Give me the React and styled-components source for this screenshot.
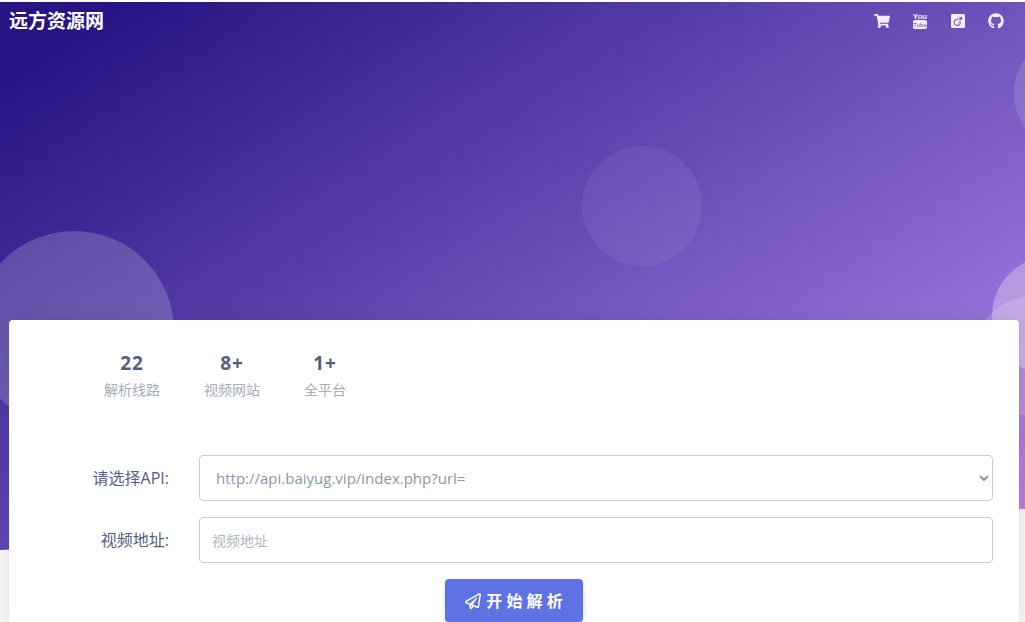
import React, { useState } from 'react';
import styled, { createGlobalStyle } from 'styled-components';
import { FaShoppingCart, FaViadeoSquare, FaGithub, FaRegPaperPlane } from 'react-icons/fa';

const GlobalStyle = createGlobalStyle`
  * {
    box-sizing: border-box;
  }

  body {
    margin: 0;
    background: #f4f4f5;
    color: #525f7f;
    font-family: 'Open Sans', 'Noto Sans CJK SC', sans-serif;
    font-size: 16px;
    line-height: 24px;
  }
`;

const Page = styled.div`
  display: flex;
  flex-direction: column;
  min-height: 100vh;
  border-top: 2px solid #fdfdfe;
`;

const Hero = styled.header`
  position: relative;
  flex: none;
  height: 548px;
  overflow: hidden;
  background: linear-gradient(147deg, #281483 7%, #8f6ed5 76%, #d782d9 110%);
  clip-path: polygon(0 0, 100% 0, 100% 507px, 0 100%);
`;

const Navbar = styled.nav`
  position: relative;
  display: flex;
  align-items: center;
  justify-content: space-between;
  height: 38px;
  padding: 0 20px 0 9px;
`;

const Brand = styled.a`
  color: #fff;
  font-size: 19px;
  font-weight: 700;
  text-decoration: none;
`;

const NavLinks = styled.div`
  display: flex;
  gap: 20px;
`;

const NavLink = styled.a`
  display: flex;
  align-items: center;
  justify-content: center;
  width: 18px;
  height: 18px;
  color: #f3edff;
  font-size: 16px;
`;

// Translucent bubbles floating on the hero gradient
const Bubble = styled.span`
  position: absolute;
  top: ${(p) => p.$top};
  left: ${(p) => p.$left || 'auto'};
  right: ${(p) => p.$right || 'auto'};
  width: ${(p) => p.$size || '120px'};
  height: ${(p) => p.$size || '120px'};
  border-radius: 50%;
  background: rgba(255, 255, 255, ${(p) => p.$alpha});
`;

const Card = styled.main`
  position: relative;
  flex: 1;
  margin: -230px 6px 0 9px;
  padding: 30px 26px 0 0;
  border-radius: 4px 4px 0 0;
  background: #fff;
  box-shadow: 0 0 16px rgba(0, 0, 0, 0.08);
`;

const Stats = styled.div`
  display: flex;
  gap: 44px;
  padding-left: 95px;
  margin-bottom: 52px;
`;

const Stat = styled.div`
  text-align: center;
`;

const StatValue = styled.strong`
  display: block;
  font-size: 19px;
  line-height: 27px;
  letter-spacing: 1px;
`;

const StatLabel = styled.span`
  display: block;
  color: #a5adb6;
  font-size: 14px;
  line-height: 26px;
`;

const Form = styled.form`
  display: flex;
  flex-direction: column;
  gap: 16px;
`;

const Field = styled.div`
  display: grid;
  grid-template-columns: 160px 1fr;
  column-gap: 30px;
  align-items: center;
`;

const Label = styled.label`
  text-align: right;
`;

const Select = styled.select`
  width: 100%;
  height: 46px;
  padding: 0 12px;
  border: 1px solid #cacdd2;
  border-radius: 4px;
  background: #fff;
  color: #8898aa;
  font: inherit;
  font-size: 15px;
`;

const Input = styled.input`
  width: 100%;
  height: 46px;
  padding: 0 12px;
  border: 1px solid #cacdd2;
  border-radius: 4px;
  background: #fff;
  color: #8898aa;
  font: inherit;
  font-size: 14px;

  &::placeholder {
    color: #adb5bd;
    opacity: 1;
  }
`;

const SubmitButton = styled.button`
  display: flex;
  align-items: center;
  align-self: center;
  gap: 5px;
  height: 43px;
  margin-left: 26px;
  padding: 0 20px;
  border: none;
  border-radius: 4px;
  background: #5e72e4;
  color: #fff;
  font: inherit;
  font-weight: 700;
  cursor: pointer;
  box-shadow: 0 4px 6px rgba(50, 50, 93, 0.11), 0 1px 3px rgba(0, 0, 0, 0.08);

  &:hover {
    background: #4c62e0;
  }
`;

const stats = [
  { value: '22', label: '解析线路' },
  { value: '8+', label: '视频网站' },
  { value: '1+', label: '全平台' },
];

const apis = ['http://api.baiyug.vip/index.php?url='];

// Stacked logo: the word on top, the tube underneath
const YoutubeIcon = () => (
  <svg width="16" height="18" viewBox="0 0 16 18" aria-hidden="true">
    <text x="8" y="7" textAnchor="middle" fontFamily="Liberation Sans, sans-serif" fontSize="8" fontWeight="700" fill="currentColor">You</text>
    <rect x="1" y="8" width="14" height="9" rx="2" fill="currentColor" />
    <text x="8" y="15" textAnchor="middle" fontFamily="Liberation Sans, sans-serif" fontSize="6" fill="#6549b0">Tube</text>
  </svg>
);

const App = () => {
  const [api, setApi] = useState(apis[0]);
  const [url, setUrl] = useState('');

  const handleSubmit = (e) => {
    e.preventDefault();
    if (url) window.open(api + url);
  };

  return (
    <Page>
      <GlobalStyle />
      <Hero>
        <Bubble $left="-26px" $top="229px" $size="200px" $alpha={0.18} />
        <Bubble $left="calc(50% + 69px)" $top="144px" $alpha={0.06} />
        <Bubble $right="-109px" $top="31px" $alpha={0.12} />
        <Bubble $right="-87px" $top="254px" $alpha={0.3} />
        <Bubble $right="-69px" $top="294px" $alpha={0.15} />
        <Navbar>
          <Brand href="#">远方资源网</Brand>
          <NavLinks>
            <NavLink href="#" aria-label="Shop"><FaShoppingCart /></NavLink>
            <NavLink href="#" aria-label="YouTube"><YoutubeIcon /></NavLink>
            <NavLink href="#" aria-label="Viadeo"><FaViadeoSquare /></NavLink>
            <NavLink href="#" aria-label="GitHub"><FaGithub /></NavLink>
          </NavLinks>
        </Navbar>
      </Hero>
      <Card>
        <Stats>
          {stats.map((s) => (
            <Stat key={s.label}>
              <StatValue>{s.value}</StatValue>
              <StatLabel>{s.label}</StatLabel>
            </Stat>
          ))}
        </Stats>
        <Form onSubmit={handleSubmit}>
          <Field>
            <Label htmlFor="api">请选择API:</Label>
            <Select id="api" value={api} onChange={(e) => setApi(e.target.value)}>
              {apis.map((a) => (
                <option key={a} value={a}>{a}</option>
              ))}
            </Select>
          </Field>
          <Field>
            <Label htmlFor="url">视频地址:</Label>
            <Input id="url" placeholder="视频地址" value={url} onChange={(e) => setUrl(e.target.value)} />
          </Field>
          <SubmitButton type="submit">
            <FaRegPaperPlane />
            开 始 解 析
          </SubmitButton>
        </Form>
      </Card>
    </Page>
  );
};

export default App;
